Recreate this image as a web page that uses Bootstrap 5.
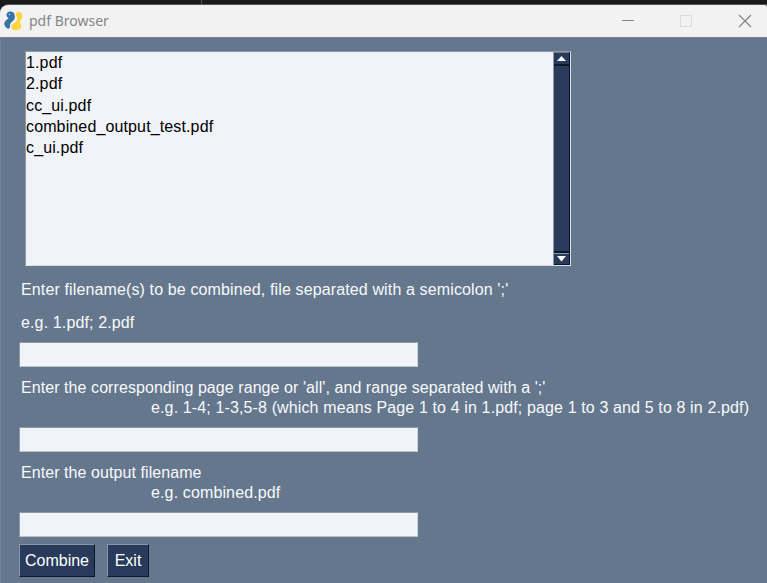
<!DOCTYPE html>
<html lang="en">
<head>
<meta charset="utf-8">
<meta name="viewport" content="width=device-width, initial-scale=1">
<title>pdf Browser</title>
<link href="https://cdn.jsdelivr.net/npm/bootstrap@5.3.0/dist/css/bootstrap.min.css" rel="stylesheet">
<style>
body{height:583px;background:#1b1b1b;font-family:"Liberation Sans",Arial,sans-serif;font-size:16px;color:#fff;padding-top:4px}
.backdrop-seam{left:201px;top:0;width:1px;height:4px;background:#555}
.app-window{height:579px;background:#64778d;border-radius:9px 0 0 0;border-top:1px solid #555}
.title-strip{height:32px;background:#f2f2f2;padding-left:4px;border-radius:8px 3px 0 0;font-family:"Noto Sans","Segoe UI",sans-serif;font-size:14px;color:#858585}
.title-name{margin-left:6px;line-height:20px}
.sys-buttons svg{display:block}
.client{height:546px;border-top:1px solid #75808d;border-left:1px solid #70829a;padding:13px 0 0 17px}
.file-box{width:546px;height:215px;margin-left:7px;border:1px solid #909aa5;border-right-color:#d9dfe4;border-bottom-color:#d9dfe4;background:#f0f3f7;color:#000}
.file-rows{list-style:none;margin:0;padding:0;line-height:21.3px;letter-spacing:.13px}
.scroller{width:17px;background:#283b5b;border:1px solid #8d98a8;border-width:0 1px 0 1px;border-right-color:#0e1728}
.scroller span{height:14px;border-top:1px solid #6d7b92;border-bottom:2px solid #0e1728}
.scroller span:last-child{border-top:2px solid #0e1728;border-bottom-width:1px;box-shadow:inset 0 1px #8d98a8}
.scroller svg{display:block}
.hint{margin-left:3px;line-height:20px;white-space:pre;color:#f8fafc;letter-spacing:.13px}
.field{width:399px;height:25px;border:1px solid #8c98a5;border-right-color:#cfd6dc;border-bottom-color:#b9c2ca;border-radius:0;background:#f0f3f7;padding:0;margin-left:1px}
.tk-btn{height:33px;border-radius:0;background:#283b5b;color:#fff;border:1px solid;border-color:#8a97a9 #0e1728 #0e1728 #8a97a9;padding:0;font-size:16px;line-height:31px}
.tk-btn:hover{background:#283b5b;color:#fff}
.indent{padding-left:130px;letter-spacing:.13px}
.filenames-hint{margin-top:14px}
.example-hint{margin-top:13px}
.filenames-field{margin-top:9px}
.stacked-hint{margin-top:11px;letter-spacing:.07px}
.stacked-field{margin-top:9px}
.actions{margin:7px 0 0 1px;gap:12px}
.wide-btn{width:76px}
.slim-btn{width:42px}
</style>
<script src="https://cdn.jsdelivr.net/npm/bootstrap@5.3.0/dist/js/bootstrap.bundle.min.js"></script>
</head>
<body class="overflow-hidden position-relative">
<div class="backdrop-seam position-absolute"></div>
<main class="app-window">
  <header class="title-strip d-flex align-items-center">
    <svg width="19" height="20" viewBox="0 0 19 20">
      <path d="M3 2Q6-.5 9.500 1.500Q11.500 4 10.500 8Q9.500 10 7.500 11Q5.500 13 6 16Q5.500 18.500 3.500 17.500Q0 15.500 .3 12Q1 9 4.500 7.500Q1.500 5 3 2Z" fill="#3475a5"/>
      <path d="M12 2.500Q14-.3 17 1.500Q19.500 5 17.500 8.500Q15.500 10.500 16 12.500Q18.500 14.500 16.500 17.500Q13.500 20 9.500 19Q6.500 18 7.500 14.500Q8.500 12.500 11 11.500Q13.500 9.500 13 6.500Q11.500 4.500 12 2.500Z" fill="#fbd63f"/>
      <circle cx="5.500" cy="3.600" r=".7" fill="#fff"/>
    </svg>
    <span class="title-name">pdf Browser</span>
    <div class="sys-buttons ms-auto">
      <svg width="146" height="32" viewBox="0 0 146 32" fill="none">
        <path d="M1 15.500H13" stroke="#888"/>
        <rect x="59.500" y="10.500" width="11" height="11" stroke="#dcdcdc"/>
        <path d="M118 10L130 22M130 10L118 22" stroke="#858585" stroke-width="1.200"/>
      </svg>
    </div>
  </header>
  <section class="client d-flex flex-column align-items-start">
    <div class="file-box d-flex">
      <ul class="file-rows flex-grow-1">
        <li>1.pdf</li><li>2.pdf</li><li>cc_ui.pdf</li><li>combined_output_test.pdf</li><li>c_ui.pdf</li>
      </ul>
      <div class="scroller d-flex flex-column justify-content-between">
        <span><svg width="15" height="10" viewBox="0 0 15 10"><path d="M7.500 3L12 8H3Z" fill="#fff"/></svg></span>
        <span><svg width="15" height="10" viewBox="0 0 15 10"><path d="M3 3H12L7.500 8.500Z" fill="#fff"/></svg></span>
      </div>
    </div>
    <div class="hint filenames-hint">Enter filename(s) to be combined, file separated with a semicolon ';'</div>
    <div class="hint example-hint">e.g. 1.pdf; 2.pdf</div>
    <input class="field form-control filenames-field" aria-label="Filenames">
    <div class="hint stacked-hint">Enter the corresponding page range or 'all', and range separated with a ';'<div class="indent">e.g. 1-4; 1-3,5-8 (which means Page 1 to 4 in 1.pdf; page 1 to 3 and 5 to 8 in 2.pdf)</div></div>
    <input class="field form-control stacked-field" aria-label="Page ranges">
    <div class="hint stacked-hint">Enter the output filename<div class="indent">e.g. combined.pdf</div></div>
    <input class="field form-control stacked-field" aria-label="Output filename">
    <div class="d-flex actions"><button class="btn tk-btn wide-btn">Combine</button><button class="btn tk-btn slim-btn">Exit</button></div>
  </section>
</main>
</body>
</html>
